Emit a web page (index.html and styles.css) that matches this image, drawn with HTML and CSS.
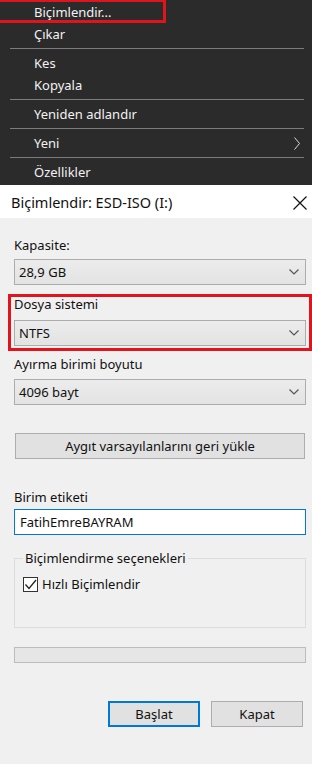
FILE: index.html
```html
<!DOCTYPE html>
<html lang="tr">
<head>
<meta charset="utf-8">
<title>Biçimlendir</title>
<link rel="stylesheet" href="styles.css">
</head>
<body>
<div class="menu">
  <div class="annot annot-menu"></div>
  <div class="mi">Biçimlendir...</div>
  <div class="mi">Çıkar</div>
  <div class="sep"></div>
  <div class="mi">Kes</div>
  <div class="mi">Kopyala</div>
  <div class="sep"></div>
  <div class="mi">Yeniden adlandır</div>
  <div class="sep"></div>
  <div class="mi has-sub">Yeni
    <svg class="sub" width="6" height="13" viewBox="0 0 6 13"><path d="M0.5 0.5 L5.5 6.5 L0.5 12.5" fill="none" stroke="#d8d8d8" stroke-width="1"/></svg>
  </div>
  <div class="sep"></div>
  <div class="mi">Özellikler</div>
</div>

<div class="dialog">
  <div class="titlebar">
    <span class="title">Biçimlendir: ESD-ISO (I:)</span>
    <svg class="close" width="14" height="14" viewBox="0 0 14 14"><path d="M0.5 0.5 L13.5 13.5 M13.5 0.5 L0.5 13.5" stroke="#111" stroke-width="1.2" fill="none"/></svg>
  </div>
  <div class="body">
    <div class="lbl lbl-first">Kapasite:</div>
    <div class="combo"><span>28,9 GB</span><svg class="chev" width="10" height="6" viewBox="0 0 10 6"><path d="M0.5 0.5 L5 5 L9.5 0.5" fill="none" stroke="#555" stroke-width="1.2"/></svg></div>

    <div class="hl">
      <div class="lbl lbl-hl">Dosya sistemi</div>
      <div class="combo combo-hl"><span>NTFS</span><svg class="chev" width="10" height="6" viewBox="0 0 10 6"><path d="M0.5 0.5 L5 5 L9.5 0.5" fill="none" stroke="#555" stroke-width="1.2"/></svg></div>
    </div>

    <div class="lbl lbl-alloc">Ayırma birimi boyutu</div>
    <div class="combo combo-alloc"><span>4096 bayt</span><svg class="chev" width="10" height="6" viewBox="0 0 10 6"><path d="M0.5 0.5 L5 5 L9.5 0.5" fill="none" stroke="#555" stroke-width="1.2"/></svg></div>

    <div class="btn btn-wide">Aygıt varsayılanlarını geri yükle</div>

    <div class="lbl lbl-vol">Birim etiketi</div>
    <div class="textbox">FatihEmreBAYRAM</div>

    <fieldset class="group">
      <legend>Biçimlendirme seçenekleri</legend>
      <div class="check-row">
        <span class="checkbox"><svg width="13" height="13" viewBox="0 0 13 13"><path d="M1.5 6.5 L5 10.5 L12 2" fill="none" stroke="#222" stroke-width="1.3"/></svg></span>
        <span>Hızlı Biçimlendir</span>
      </div>
    </fieldset>

    <div class="progress"></div>

    <div class="actions">
      <div class="btn btn-act btn-default">Başlat</div>
      <div class="btn btn-act">Kapat</div>
    </div>
  </div>
</div>
</body>
</html>
```

FILE: styles.css
```css
* { box-sizing: border-box; }
html, body { margin: 0; padding: 0; }
body {
  width: 312px;
  height: 764px;
  overflow: hidden;
  background: #f0f0f0;
  font-family: "Noto Sans", "Open Sans", sans-serif;
  font-size: 13px;
  color: #111;
}

/* context menu */
.menu {
  position: relative;
  background: #2b2b2b;
  height: 185px;
  padding-top: 1px;
  color: #f2f2f2;
}
.mi {
  height: 22px;
  line-height: 22px;
  padding-left: 34px;
  position: relative;
}
.sep {
  height: 7px;
  padding: 3px 8px 3px 10px;
}
.sep::before {
  content: "";
  display: block;
  height: 1px;
  background: #7d7d7d;
}
.sub {
  position: absolute;
  right: 12px;
  top: 5px;
}
.annot {
  position: absolute;
  border: 3px solid #e0141c;
  pointer-events: none;
}
.annot-menu {
  left: -4px;
  top: -1px;
  width: 170px;
  height: 24px;
}

/* dialog */
.titlebar {
  height: 33px;
  background: #fff;
  display: flex;
  align-items: center;
  justify-content: space-between;
  padding: 0 5px 0 11px;
}
.title { font-size: 14.5px; color: #111; }
.close { margin-top: 2px; }

.body {
  padding: 0 6px 0 14px;
}
.lbl {
  height: 18px;
  line-height: 18px;
}
.lbl-first { margin-top: 18px; }
.combo {
  height: 26px;
  margin-top: 5px;
  background: linear-gradient(#ececec, #e3e3e3);
  border: 1px solid #acacac;
  display: flex;
  align-items: center;
  justify-content: space-between;
  padding: 0 6px 0 4px;
}

.hl {
  margin: 9px -6px 0 -6px;
  border: 3px solid #e0141c;
  padding: 0 3px 2px 3px;
}
.lbl-hl { height: 14px; line-height: 14px; }
.combo-hl { margin-top: 9px; }

.lbl-alloc { margin-top: 4px; }
.combo-alloc { margin-top: 6px; }

.btn {
  background: #e1e1e1;
  border: 1px solid #adadad;
  display: flex;
  align-items: center;
  justify-content: center;
}
.btn-wide {
  height: 26px;
  margin: 28px 1px 0 1px;
}

.lbl-vol { margin-top: 29px; }
.textbox {
  height: 26px;
  margin-top: 3px;
  background: #fff;
  border: 1px solid #0078d7;
  padding-left: 5px;
  display: flex;
  align-items: center;
}

.group {
  margin: 15px 0 0 0;
  padding: 9px 8px 34px 8px;
  border: 1px solid #dcdcdc;
  min-width: 0;
}
.group legend {
  padding: 0 2px;
  line-height: 16px;
  height: 16px;
}
.check-row {
  display: flex;
  align-items: center;
  gap: 4px;
}
.checkbox {
  width: 15px;
  height: 15px;
  border: 1px solid #333;
  background: #fff;
  display: flex;
  align-items: center;
  justify-content: center;
}

.progress {
  height: 16px;
  margin-top: 19px;
  background: #e6e6e6;
  border: 1px solid #bcbcbc;
}

.actions {
  display: flex;
  justify-content: flex-end;
  gap: 11px;
  margin-top: 38px;
  padding-right: 3px;
}
.btn-act {
  width: 92px;
  height: 26px;
}
.btn-default {
  border: 2px solid #0078d7;
}
```
